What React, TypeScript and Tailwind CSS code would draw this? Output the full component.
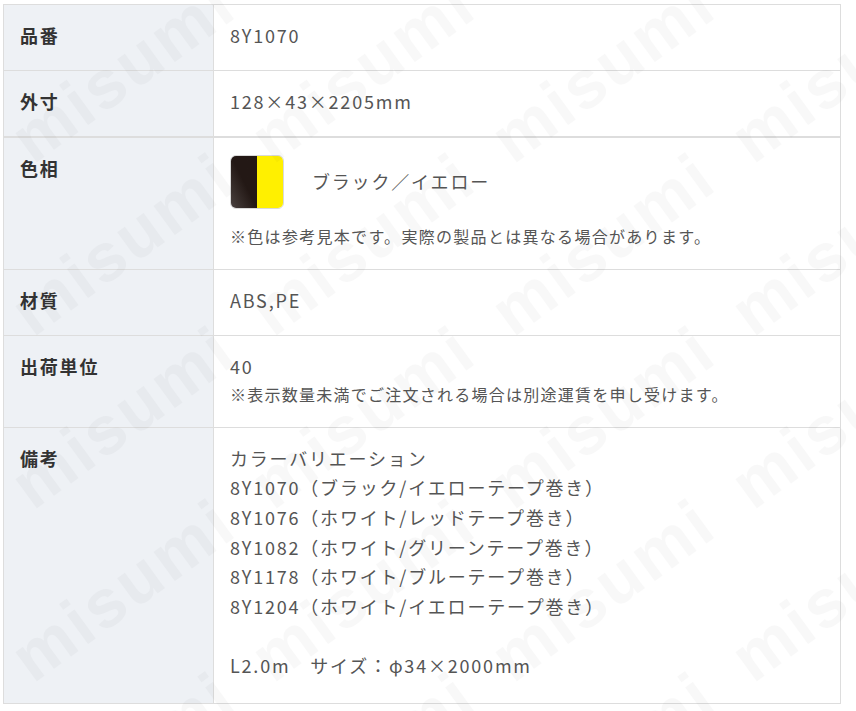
import React from "react";

const font = '"Noto Sans CJK JP", "Noto Sans", sans-serif';

const WM_POS: [number, number][] = [
  [33, 165],
  [-207, 165],
  [33, 338],
  [-207, 338],
];

function Watermark() {
  return (
    <svg
      className="pointer-events-none absolute inset-0 h-full w-full"
      width="856"
      height="711"
      aria-hidden="true"
    >
      <defs>
        <pattern id="wm" x="0" y="0" width="240" height="173" patternUnits="userSpaceOnUse">
          {WM_POS.map(([x, y], i) => (
            <text
              key={i}
              x="0"
              y="0"
              transform={`translate(${x} ${y}) rotate(-36)`}
              fontFamily='"Liberation Sans", Arial, sans-serif'
              fontWeight="700"
              fontSize="68"
              letterSpacing="3"
              fill="rgba(0,0,0,0.026)"
            >
              misumi
            </text>
          ))}
        </pattern>
      </defs>
      <rect x="0" y="0" width="856" height="711" fill="url(#wm)" />
    </svg>
  );
}

function Row({
  label,
  children,
  border = "border-b",
  pb = "pb-[19.6px]",
}: {
  label: string;
  children: React.ReactNode;
  border?: string;
  pb?: string;
}) {
  return (
    <div className={`grid grid-cols-[210px_1fr] border-[#dddddd] ${border}`}>
      <div
        className={`border-r border-[#dddddd] bg-[#eef1f5] pt-[15.7px] ${pb} pl-4 text-[18px] font-bold leading-[29.7px] tracking-[0.1em] text-[#333333]`}
      >
        {label}
      </div>
      <div
        className={`bg-white pt-[15.7px] ${pb} pl-4 pr-4 text-[18px] leading-[29.7px] tracking-[0.1em] text-[#555555]`}
      >
        {children}
      </div>
    </div>
  );
}

export default function App() {
  return (
    <div className="relative h-[711px] w-[856px] overflow-hidden bg-white" style={{ fontFamily: font }}>
      <div className="pl-[3px] pt-[4px]">
        <div className="w-[838px] border-l border-r border-t border-[#dddddd]">
          <Row label="品番">8Y1070</Row>
          <Row label="外寸" border="border-b-2">
            128×43×2205mm
          </Row>
          <Row label="色相">
            <div className="mb-[14.6px] mt-[1px] flex items-center gap-[28px]">
              <div className="flex h-[54px] w-[54px] overflow-hidden rounded-[6px] border border-[#d9d9d9]">
                <div className="h-full w-1/2 bg-gradient-to-tr from-[#4a4240] via-[#231815] to-[#231815]" />
                <div className="h-full w-1/2 bg-[#fff000]" />
              </div>
              <span>ブラック／イエロー</span>
            </div>
            <div className="text-[16px] leading-[26px] tracking-[1.3px]">
              ※色は参考見本です。実際の製品とは異なる場合があります。
            </div>
          </Row>
          <Row label="材質">ABS,PE</Row>
          <Row label="出荷単位">
            <div>40</div>
            <div className="text-[16px] leading-[26px] tracking-[1.25px]">
              ※表示数量未満でご注文される場合は別途運賃を申し受けます。
            </div>
          </Row>
          <Row label="備考" pb="pb-[21.6px]">
            <div>カラーバリエーション</div>
            <div>8Y1070（ブラック/イエローテープ巻き）</div>
            <div>8Y1076（ホワイト/レッドテープ巻き）</div>
            <div>8Y1082（ホワイト/グリーンテープ巻き）</div>
            <div>8Y1178（ホワイト/ブルーテープ巻き）</div>
            <div>8Y1204（ホワイト/イエローテープ巻き）</div>
            <div>&nbsp;</div>
            <div>L2.0m　サイズ：φ34×2000mm</div>
          </Row>
        </div>
      </div>
      <Watermark />
    </div>
  );
}
